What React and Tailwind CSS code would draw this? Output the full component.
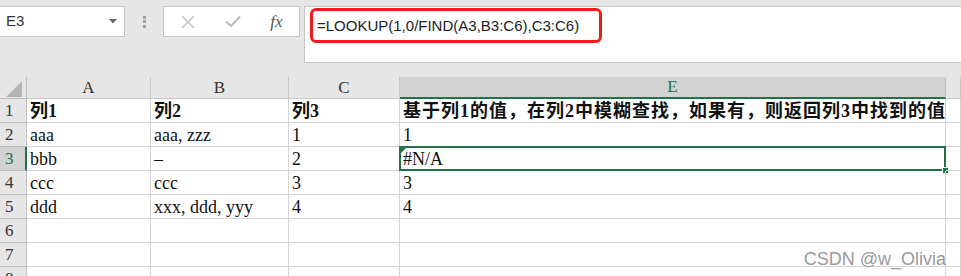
import React from 'react';

const COLS = ['A', 'B', 'C', 'E', ''];
const ROWS = [
  ['列1', '列2', '列3', '基于列1的值，在列2中模糊查找，如果有，则返回列3中找到的值', ''],
  ['aaa', 'aaa, zzz', '1', '1', ''],
  ['bbb', '–', '2', '#N/A', ''],
  ['ccc', 'ccc', '3', '3', ''],
  ['ddd', 'xxx, ddd, yyy', '4', '4', ''],
  ['', '', '', '', ''],
  ['', '', '', '', ''],
  ['', '', '', '', ''],
];

const serif = { fontFamily: '"Liberation Serif", "Noto Sans CJK SC", serif' };

function NameBox() {
  return (
    <div className="w-[125px] h-[31px] bg-white border border-l-0 border-[#c6c6c6] flex items-center justify-between pl-[6px] pr-[7px] shrink-0">
      <span className="text-[15px] text-[#333]">E3</span>
      <svg width="8" height="5" viewBox="0 0 8 5">
        <path d="M0 0 L8 0 L4 4.5 Z" fill="#666" />
      </svg>
    </div>
  );
}

function Buttons() {
  return (
    <div className="w-[137px] h-[31px] bg-white border border-[#c6c6c6] flex items-center shrink-0">
      <div className="w-[45px] flex justify-center pl-[2px]">
        <svg width="14" height="14" viewBox="0 0 14 14">
          <path d="M1 1 L13 13 M13 1 L1 13" stroke="#c4c4c4" strokeWidth="1.6" />
        </svg>
      </div>
      <div className="w-[45px] flex justify-center pl-[2px]">
        <svg width="16" height="13" viewBox="0 0 16 13">
          <path d="M1 6.5 L6 11 L15 1.5" stroke="#bdbdbd" strokeWidth="2.2" fill="none" />
        </svg>
      </div>
      <div className="flex-1 flex justify-center">
        <span className="italic text-[17px] text-[#555]" style={{ fontFamily: '"Liberation Serif", serif' }}>fx</span>
      </div>
    </div>
  );
}

export default function App() {
  return (
    <div className="w-[961px] h-[276px] bg-[#e6e6e6] overflow-hidden relative" style={{ fontFamily: '"Liberation Sans", Arial, sans-serif' }}>
      {/* formula bar */}
      <div className="flex items-start pt-[6px] h-[77px]">
        <NameBox />
        <div className="w-[38px] h-[31px] flex flex-col items-center justify-center gap-[1.5px] shrink-0">
          <div className="w-[3px] h-[3px] bg-[#a0a0a0]" />
          <div className="w-[3px] h-[3px] bg-[#a0a0a0]" />
          <div className="w-[3px] h-[3px] bg-[#a0a0a0]" />
        </div>
        <Buttons />
        <div className="ml-[4px] flex-1 h-[57px] bg-white border border-r-0 border-[#c6c6c6] relative pl-[12px] pt-[7px]">
          <span className="text-[15px] text-[#222]">=LOOKUP(1,0/FIND(A3,B3:C6),C3:C6)</span>
          <div className="absolute left-[5px] top-[1px] w-[292px] h-[35px] border-[3px] border-[#f01c1c] rounded-[6px]" />
        </div>
      </div>

      {/* grid */}
      <div className="grid grid-cols-[27px_124px_138px_111px_546px_15px] grid-rows-[22px_repeat(8,24px)] bg-white" style={serif}>
        <div className="bg-[#e6e6e6] border-r border-b border-[#bdbdbd] flex items-end justify-end pr-[4px] pb-[1px]">
          <svg width="16" height="16" viewBox="0 0 16 16">
            <path d="M16 0 L16 16 L0 16 Z" fill="#b5b5b5" />
          </svg>
        </div>
        {COLS.map((c, i) =>
          c === 'E' ? (
            <div key={i} className="bg-[#d2d2d2] border-r border-[#bdbdbd] border-b-2 border-b-[#217346] flex items-center justify-center text-[17px] text-[#217346]">
              {c}
            </div>
          ) : (
            <div key={i} className="bg-[#e6e6e6] border-r border-b border-[#c6c6c6] flex items-center justify-center text-[17px] text-[#333]">
              {c}
            </div>
          )
        )}
        {ROWS.map((row, r) => (
          <React.Fragment key={r}>
            {r === 2 ? (
              <div className="bg-[#d2d2d2] border-b border-[#bdbdbd] border-r-2 border-r-[#217346] flex items-center pl-[5px] text-[17px] text-[#217346]">
                {r + 1}
              </div>
            ) : (
              <div className="bg-[#e6e6e6] border-r border-b border-[#bdbdbd] flex items-center pl-[5px] text-[17px] text-[#333]">
                {r + 1}
              </div>
            )}
            {row.map((v, c) => (
              <div
                key={c}
                className={
                  'border-r border-b border-[#d4d4d4] flex items-center pl-[3px] pt-[2px] text-[18px] text-[#111] whitespace-nowrap relative ' +
                  (r === 0 ? 'font-bold ' : '') +
                  (r === 0 && c === 3 ? 'tracking-[1px] ' : '')
                }
              >
                {v}
                {r === 2 && c === 3 && (
                  <>
                    <div className="absolute left-[-1px] top-[-1px] right-[-1px] bottom-[-1px] border-2 border-[#217346]" />
                    <svg className="absolute left-[1px] top-[1px]" width="5" height="5" viewBox="0 0 5 5">
                      <path d="M0 0 L5 0 L0 5 Z" fill="#217346" />
                    </svg>
                    <div className="absolute right-[-4px] bottom-[-4px] w-[7px] h-[7px] bg-[#217346] border border-white" />
                  </>
                )}
              </div>
            ))}
          </React.Fragment>
        ))}
      </div>

      <div className="absolute right-[15px] top-[246px] text-[18px] text-[#9a9a9a]" style={{ textShadow: '0 0 2px #fff, 0 0 1px #fff' }}>
        CSDN @w_Olivia
      </div>
    </div>
  );
}
